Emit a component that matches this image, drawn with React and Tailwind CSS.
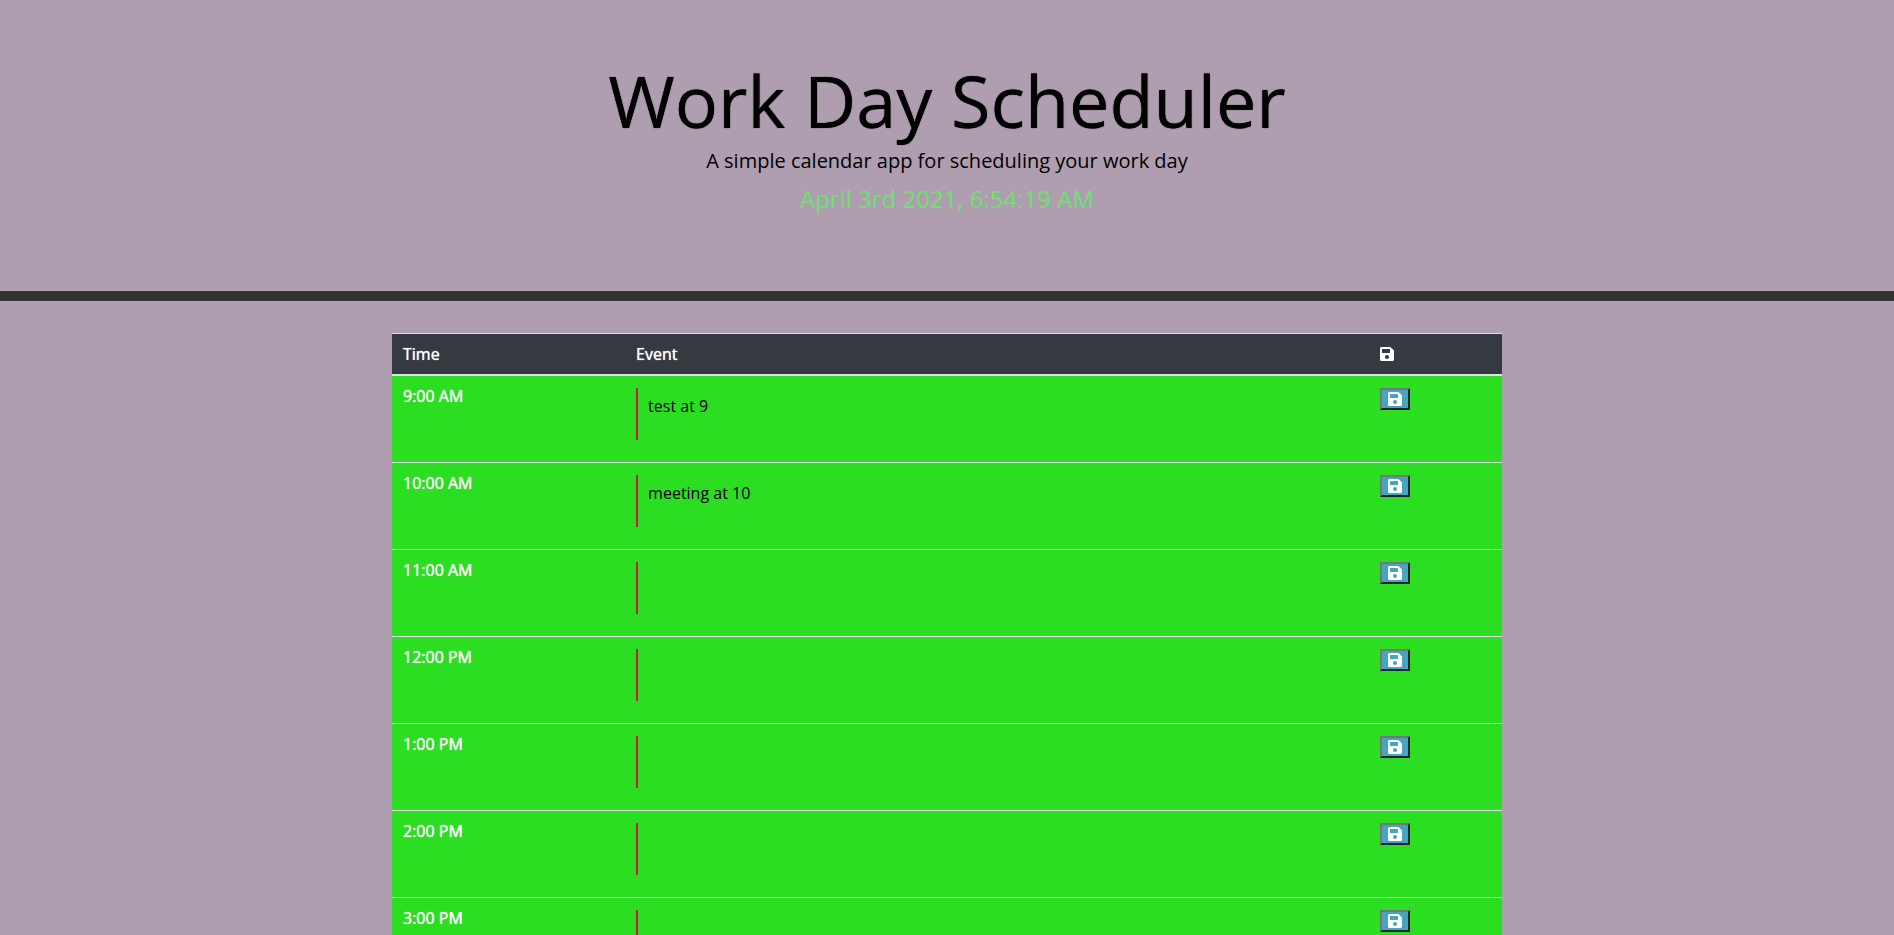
import { FaSave } from "react-icons/fa";

const hours = [
  { time: "9:00 AM", event: "test at 9" },
  { time: "10:00 AM", event: "meeting at 10" },
  { time: "11:00 AM", event: "" },
  { time: "12:00 PM", event: "" },
  { time: "1:00 PM", event: "" },
  { time: "2:00 PM", event: "" },
  { time: "3:00 PM", event: "" },
];

function HourRow({ time, event }) {
  const id = `event-${time.replace(/\W/g, "-")}`;
  return (
    <tr className="h-[87px] border-t border-[#dee2e6] bg-[#2bde22] align-top">
      <th scope="row" className="px-[11px] py-2 text-left font-normal text-white [text-shadow:0_0_1px_white]">
        <label htmlFor={id}>{time}</label>
      </th>
      <td className="px-[11px] pt-3">
        <textarea
          id={id}
          defaultValue={event}
          className="block h-[52px] w-full resize-none overflow-hidden border-l-2 border-[#c11f41] bg-transparent px-2.5 py-1.5 text-black outline-none"
        />
      </td>
      <td className="px-[11px] pt-3">
        <button
          type="button"
          aria-label={`Save ${time}`}
          className="flex h-[22px] w-[30px] items-center justify-center border-2 border-t-[#767676] border-r-[#212529] border-b-[#212529] border-l-[#767676] bg-[#46a5bf] text-white"
        >
          <FaSave className="h-4 w-3.5" />
        </button>
      </td>
    </tr>
  );
}

export default function App() {
  return (
    <div className="h-screen overflow-hidden bg-[#af9eaf] font-['Open_Sans',sans-serif] text-base text-black">
      <header className="mb-8 border-b-[10px] border-[#323232] px-8 pt-[57px] pb-[75px] text-center">
        <h1 className="mb-[3px] text-[72px] leading-[86px] [text-shadow:0_0_1px_black]">Work Day Scheduler</h1>
        <p className="text-[20px] leading-[30px]">A simple calendar app for scheduling your work day</p>
        <p className="mt-[5px] text-[24px] leading-[35px] text-[#6fe171]">April 3rd 2021, 6:54:19 AM</p>
      </header>
      <main className="mx-auto max-w-[1110px]">
        <table className="w-full table-fixed border-collapse">
          <colgroup>
            <col className="w-[21%]" />
            <col className="w-[67%]" />
            <col className="w-[12%]" />
          </colgroup>
          <thead>
            <tr className="border-t border-b-2 border-t-[#dee2e6] border-b-[#dee2e6] bg-[#343a40] text-left text-white">
              <th scope="col" className="px-[11px] py-2 font-normal [text-shadow:0_0_1px_white]">Time</th>
              <th scope="col" className="px-[11px] py-2 font-normal [text-shadow:0_0_1px_white]">Event</th>
              <th scope="col" aria-label="Save" className="px-[11px] py-2">
                <FaSave className="h-4 w-3.5" />
              </th>
            </tr>
          </thead>
          <tbody>
            {hours.map((hour) => (
              <HourRow key={hour.time} time={hour.time} event={hour.event} />
            ))}
          </tbody>
        </table>
      </main>
    </div>
  );
}
